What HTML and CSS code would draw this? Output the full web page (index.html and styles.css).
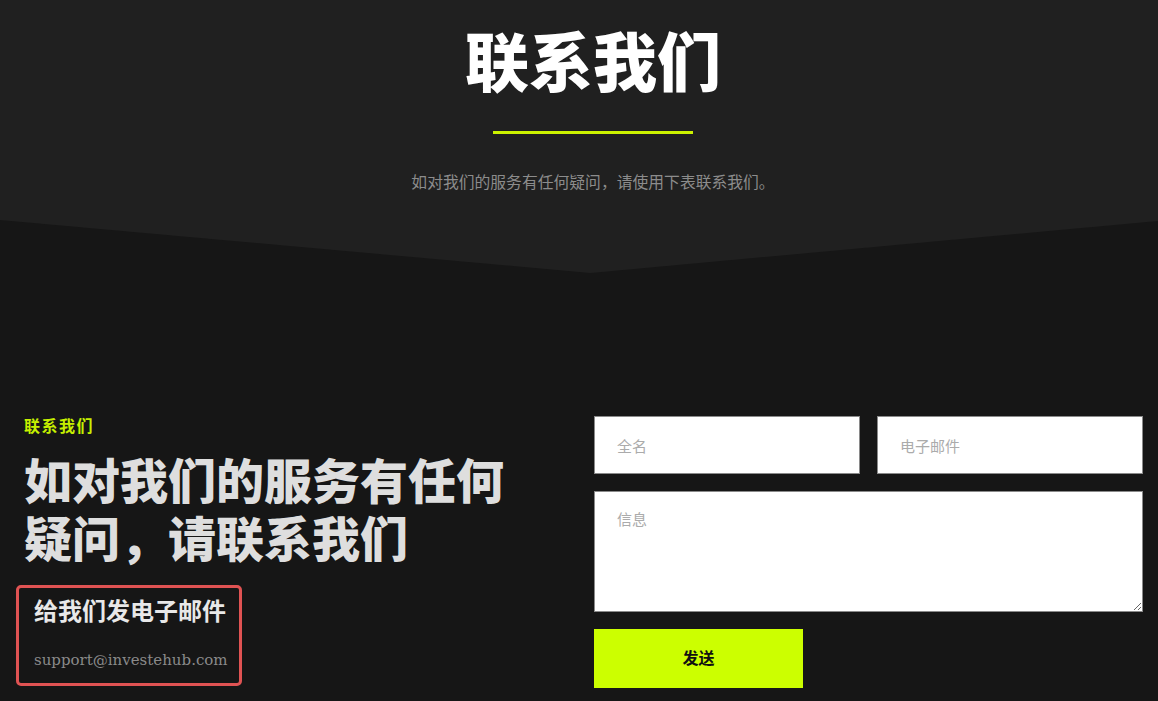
FILE: index.html
```html
<!DOCTYPE html>
<html lang="zh">
<head>
<meta charset="utf-8">
<title>联系我们</title>
<link rel="stylesheet" href="styles.css">
</head>
<body>
<header class="hero">
  <h1 class="hero-title">联系我们</h1>
  <div class="hero-line"></div>
  <p class="hero-sub">如对我们的服务有任何疑问，请使用下表联系我们。</p>
</header>
<main class="contact">
  <div class="contact-info">
    <div class="eyebrow">联系我们</div>
    <h2 class="contact-heading">如对我们的服务有任何疑问，请联系我们</h2>
    <div class="mail-box">
      <div class="mail-title">给我们发电子邮件</div>
      <div class="mail-addr">support@investehub.com</div>
    </div>
  </div>
  <form class="contact-form">
    <div class="form-row">
      <input class="field" type="text" placeholder="全名">
      <input class="field" type="email" placeholder="电子邮件">
    </div>
    <textarea class="field field-msg" placeholder="信息"></textarea>
    <button class="send-btn" type="button">发送</button>
  </form>
</main>
</body>
</html>
```

FILE: styles.css
```css
* { box-sizing: border-box; }
html, body {
  margin: 0;
  padding: 0;
  background: #161616;
  font-family: "Noto Sans CJK SC", "Noto Sans", sans-serif;
  height: 100%;
  overflow: hidden;
}
.hero {
  background: #202020;
  height: 273px;
  padding: 21px 0 0 28px;
  text-align: center;
  clip-path: polygon(0 0, 100% 0, 100% 221px, 51% 273px, 0 220px);
}
.hero-title {
  margin: 0;
  font-size: 64px;
  line-height: 74px;
  font-weight: 900;
  color: #ffffff;
}
.hero-line {
  width: 200px;
  height: 3px;
  margin: 36px auto 0;
  background: #ccf200;
}
.hero-sub {
  margin: 36px 0 0;
  font-size: 15.8px;
  line-height: 24px;
  color: #8c8c8c;
}
.contact {
  display: grid;
  grid-template-columns: 1fr 549px;
  column-gap: 30px;
  padding: 143px 15px 0 24px;
}
.eyebrow {
  font-size: 16px;
  line-height: 18px;
  font-weight: 700;
  color: #c6f000;
  letter-spacing: 1.5px;
}
.contact-heading {
  margin: 15px 0 0;
  max-width: 500px;
  font-size: 48px;
  line-height: 58px;
  font-weight: 900;
  color: #dedede;
}
.mail-box {
  margin: 20px 0 0 -8px;
  width: 226px;
  border: 3px solid #e05353;
  border-radius: 5px;
  padding: 7px 10px 11px 15px;
}
.mail-title {
  font-size: 24px;
  line-height: 30px;
  font-weight: 700;
  color: #e8e8e8;
  white-space: nowrap;
}
.mail-addr {
  margin-top: 23px;
  font-family: "DejaVu Serif", "Liberation Serif", serif;
  font-size: 15px;
  line-height: 24px;
  color: #8a8a8a;
  white-space: nowrap;
}
.contact-form {
  display: flex;
  flex-direction: column;
  align-items: flex-start;
  gap: 17px;
}
.form-row {
  display: flex;
  gap: 17px;
  width: 100%;
}
.field {
  flex: 1;
  min-width: 0;
  height: 58px;
  background: #ffffff;
  border: 1px solid #8a8a8a;
  border-radius: 0;
  padding: 0 22px;
  font-family: "Noto Sans CJK SC", "Noto Sans", sans-serif;
  font-size: 15px;
  color: #333;
  outline: none;
}
.field::placeholder { color: #ababab; }
.field-msg {
  flex: none;
  display: block;
  width: 100%;
  height: 121px;
  margin: 0;
  padding: 16px 22px;
  resize: vertical;
}
.send-btn {
  width: 209px;
  height: 59px;
  border: 0;
  background: #ccff00;
  color: #111;
  font-family: "Noto Sans CJK SC", "Noto Sans", sans-serif;
  font-size: 16px;
  font-weight: 700;
  line-height: 20px;
  padding: 0 0 3px;
  cursor: pointer;
}
```
